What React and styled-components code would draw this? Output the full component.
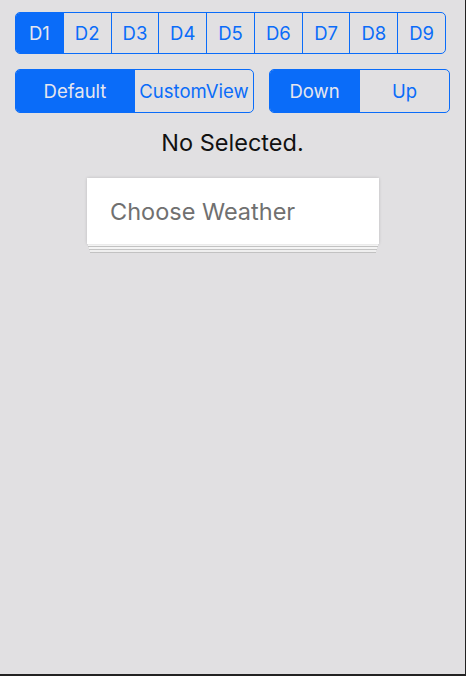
import React, { useState } from "react";
import styled, { createGlobalStyle } from "styled-components";

const Global = createGlobalStyle`
  html, body { margin: 0; padding: 0; background: #e1e0e2; }
  body { font-family: Inter, "Liberation Sans", Arial, sans-serif; }
`;

const BLUE = "#0a6cf9";

const Page = styled.div`
  width: 466px;
  height: 676px;
  box-sizing: border-box;
  background: #e1e0e2;
  border-right: 1px solid #222;
  border-bottom: 2px solid #222;
  padding: 12px 0 0 15px;
  display: flex;
  flex-direction: column;
  align-items: flex-start;
`;

const SegBar = styled.div`
  display: flex;
  width: ${(p) => p.$w}px;
  height: ${(p) => p.$h}px;
  box-sizing: border-box;
  border: 1.5px solid ${BLUE};
  border-radius: 5px;
  overflow: hidden;
`;

const Seg = styled.div`
  flex: 1;
  display: flex;
  align-items: center;
  justify-content: center;
  font-size: 18.5px;
  color: ${(p) => (p.$active ? "#e6e6ee" : BLUE)};
  background: ${(p) => (p.$active ? BLUE : "transparent")};
  & + & { border-left: 1.5px solid ${BLUE}; }
`;

const Row = styled.div`
  display: flex;
  gap: 15px;
  margin-top: 15px;
`;

const Status = styled.div`
  align-self: stretch;
  margin-left: -15px;
  text-align: center;
  font-size: 23.5px;
  color: #111;
  margin-top: 17px;
  line-height: 26px;
`;

const Card = styled.div`
  align-self: flex-start;
  margin: 22px 0 0 72px;
  width: 292px;
  height: 66px;
  box-sizing: border-box;
  background: #fff;
  display: flex;
  align-items: center;
  padding-left: 23px;
  font-size: 23.5px;
  color: #707070;
  box-shadow:
    0 0 3px rgba(0, 0, 0, 0.16),
    0 3px 0 -1px #fafafa,
    0 4px 0 -1px #c4c4c4,
    0 7px 0 -2px #f4f4f4,
    0 8px 0 -2px #c4c4c4,
    0 11px 0 -3px #efefef,
    0 12px 0 -3px #c2c2c2;
`;

export default function App() {
  const [d, setD] = useState(0);
  const [view, setView] = useState(0);
  const [dir, setDir] = useState(0);
  return (
    <>
      <Global />
      <Page>
        <SegBar $w={431} $h={42}>
          {["D1", "D2", "D3", "D4", "D5", "D6", "D7", "D8", "D9"].map((t, i) => (
            <Seg key={t} $active={i === d} onClick={() => setD(i)}>
              {t}
            </Seg>
          ))}
        </SegBar>
        <Row>
          <SegBar $w={239} $h={44}>
            {["Default", "CustomView"].map((t, i) => (
              <Seg key={t} $active={i === view} onClick={() => setView(i)}>
                {t}
              </Seg>
            ))}
          </SegBar>
          <SegBar $w={181} $h={44}>
            {["Down", "Up"].map((t, i) => (
              <Seg key={t} $active={i === dir} onClick={() => setDir(i)}>
                {t}
              </Seg>
            ))}
          </SegBar>
        </Row>
        <Status>No Selected.</Status>
        <Card>Choose Weather</Card>
      </Page>
    </>
  );
}
